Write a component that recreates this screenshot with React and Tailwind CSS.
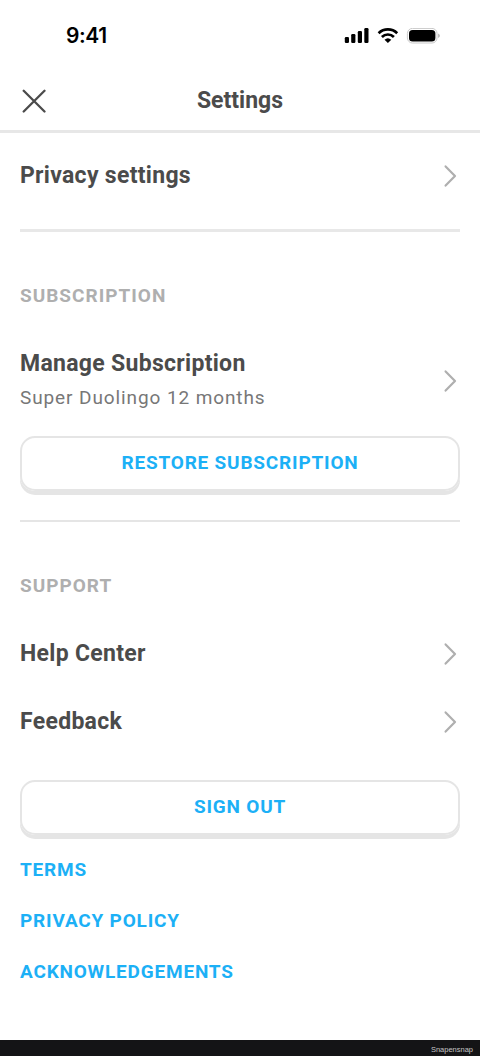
function StatusBar() {
    return (
        <div className="flex h-[72px] items-center justify-between pr-10 pl-[66px]">
            <span className="font-['Inter',sans-serif] text-[21px] leading-[72px] font-semibold tracking-[-0.4px] text-black">9:41</span>
            <svg className="h-4 w-24" viewBox="344 28 96 16" fill="none">
                <g fill="#000">
                    <rect x="344.8" y="37" width="4.2" height="6" rx="1.2" />
                    <rect x="351.2" y="34" width="4.2" height="9" rx="1.2" />
                    <rect x="357.8" y="31" width="4.2" height="12" rx="1.2" />
                    <rect x="364.3" y="28" width="4.2" height="15" rx="1.2" />
                    <path d="M384.5 39.8a5 5 0 0 1 6.8 0L387.9 43z" />
                </g>
                <path d="M378.6 33.2a13.3 13.3 0 0 1 18.6 0M381.9 37a8.5 8.5 0 0 1 12 0" stroke="#000" strokeWidth="2.7" />
                <rect x="407.4" y="28.4" width="29.6" height="14.6" rx="5" stroke="#c9c9c9" />
                <rect x="409" y="30" width="26.4" height="11.6" rx="3.6" fill="#000" />
                <path d="M438.4 33.5c1.6.8 1.6 3.6 0 4.4z" fill="#999" />
            </svg>
        </div>
    );
}

function Chevron() {
    return (
        <svg className="mr-[3px] h-6 w-[14px] shrink-0" viewBox="0 0 14 24" fill="none" stroke="#afafaf" strokeWidth="2.2" strokeLinecap="round" strokeLinejoin="round">
            <path d="M2.6 2.4 12 12 2.6 21.6" />
        </svg>
    );
}

function Row({ title, subtitle, className }) {
    return (
        <button className={`flex w-full items-center justify-between text-left ${className}`}>
            <span className="block">
                <span className="block text-[23px] leading-[34px] font-bold tracking-[0.3px]">{title}</span>
                {subtitle && <span className="block text-[19px] leading-[34px] tracking-[0.9px] text-[#777777]">{subtitle}</span>}
            </span>
            <Chevron />
        </button>
    );
}

function Button({ children, className }) {
    return (
        <button className={`flex h-[55px] w-full items-center justify-center rounded-[15px] border-2 border-[#e5e5e5] text-[19px] font-bold tracking-[0.8px] text-[#1cb0f6] shadow-[0_4px_0_#e5e5e5] ${className}`}>
            {children}
        </button>
    );
}

function SectionTitle({ children }) {
    return <h2 className="text-[19px] leading-6 font-bold tracking-[1px] text-[#afafaf]">{children}</h2>;
}

const links = ["TERMS", "PRIVACY POLICY", "ACKNOWLEDGEMENTS"];

export default function App() {
    return (
        <div className="flex h-[1056px] w-[480px] flex-col overflow-hidden bg-white font-['Roboto',sans-serif] text-[#4b4b4b]">
            <StatusBar />

            <header className="grid h-[61px] grid-cols-[1fr_auto_1fr] items-center border-b-3 border-[#e7e7e7] px-5">
                <button className="ml-[2px] w-6" aria-label="Close">
                    <svg className="h-6 w-6" viewBox="0 0 24 24" stroke="#4b4b4b" strokeWidth="2.3" strokeLinecap="round">
                        <path d="m1.7 1.7 20.8 20.8M22.5 1.7 1.7 22.5" />
                    </svg>
                </button>
                <h1 className="text-[23px] leading-[34px] font-bold">Settings</h1>
            </header>

            <main className="flex-1 px-5">
                <Row title="Privacy settings" className="mt-[26px]" />
                <hr className="mt-9 border-t-3 border-[#e8e8e8]" />

                <div className="mt-[52px]">
                    <SectionTitle>SUBSCRIPTION</SectionTitle>
                </div>
                <Row title="Manage Subscription" subtitle="Super Duolingo 12 months" className="mt-[39px]" />
                <Button className="mt-[21px]">RESTORE SUBSCRIPTION</Button>
                <hr className="mt-[29px] border-t-2 border-[#e5e5e5]" />

                <div className="mt-[52px]">
                    <SectionTitle>SUPPORT</SectionTitle>
                </div>
                <Row title="Help Center" className="mt-[39px]" />
                <Row title="Feedback" className="mt-[34px]" />
                <Button className="mt-[41px]">SIGN OUT</Button>

                <nav className="mt-[23px] flex flex-col items-start gap-[27px]">
                    {links.map((link) => (
                        <a key={link} className="text-[19px] leading-6 font-bold tracking-[0.8px] text-[#1cb0f6]">{link}</a>
                    ))}
                </nav>
            </main>

            <footer className="flex h-4 items-center justify-end bg-[#141416] pt-1 pr-[7px] font-['Liberation_Sans',sans-serif] text-[7.5px] leading-none text-[#c4c4c4]">
                Snapensnap
            </footer>
        </div>
    );
}
